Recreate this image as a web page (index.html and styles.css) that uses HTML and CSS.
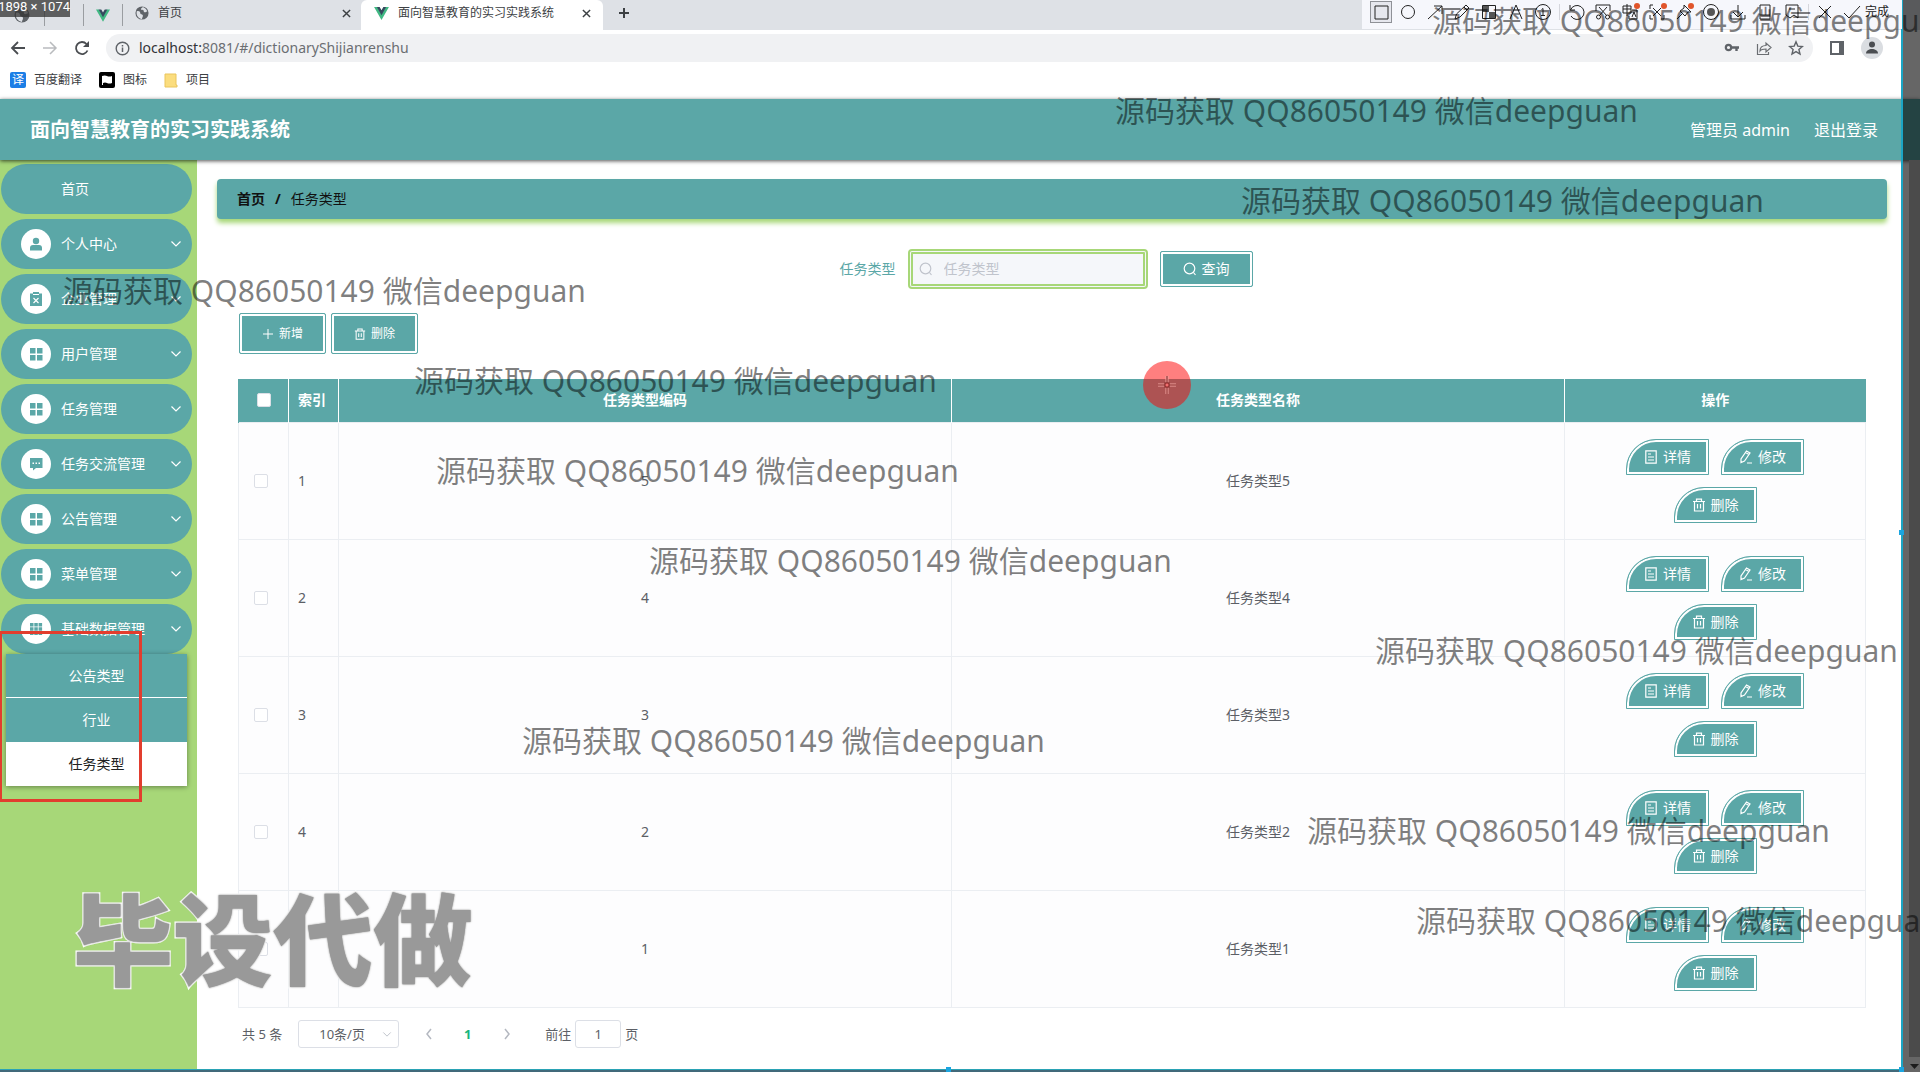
FILE: index.html
```html
<!DOCTYPE html>
<html lang="zh-CN">
<head>
<meta charset="utf-8">
<title>面向智慧教育的实习实践系统</title>
<link rel="stylesheet" href="styles.css">
</head>
<body>
<svg class="defs" aria-hidden="true">
  <symbol id="globe" viewBox="0 0 16 16"><circle cx="8" cy="8" r="7.5" fill="#5f6368"/><path d="M2 6c2-1 4 0 4 2s3 1 3 3-1 2-1 4C4 14 1 11 2 6zM9 1c-1 1-3 2-2 3s3 0 3 2 3 1 4 0c-1-3-3-4-5-5z" fill="#dee1e6"/></symbol>
  <symbol id="vue" viewBox="0 0 16 14"><path d="M0 0h3.5L8 7.5 12.500 0H16L8 14z" fill="#41b883"/><path d="M3 0h3l2 3.500L10 0h3L8 9z" fill="#35495e"/></symbol>
  <symbol id="down" viewBox="0 0 12 8"><path d="M1.500 1.500 6 6l4.500-4.500" fill="none" stroke="currentColor" stroke-width="1.200"/></symbol>
  <symbol id="grid" viewBox="0 0 14 14"><path d="M1 1h5.500v5.500H1zM8 1h5.500v5.500H8zM1 8h5.500v5.500H1zM8 8h5.500v5.500H8z" fill="#5ba7a7"/></symbol>
  <symbol id="grid9" viewBox="0 0 14 14"><path d="M1 1h3.500v3.500H1zM5.300 1h3.500v3.500H5.300zM9.600 1h3.500v3.500H9.600zM1 5.300h3.500v3.500H1zM5.300 5.300h3.500v3.500H5.300zM9.600 5.300h3.500v3.500H9.600zM1 9.600h3.500v3.500H1zM5.300 9.600h3.500v3.500H5.300zM9.600 9.600h3.500v3.500H9.600z" fill="#5ba7a7"/></symbol>
  <symbol id="person" viewBox="0 0 14 14"><circle cx="7" cy="4" r="3.200" fill="#5ba7a7"/><path d="M1 13.500v-2.500a3 3 0 0 1 3-3h6a3 3 0 0 1 3 3v2.500z" fill="#5ba7a7"/></symbol>
  <symbol id="clip" viewBox="0 0 14 14"><path d="M1 1.500h3V0h6v1.500h3V14H1z" fill="#5ba7a7"/><path d="M4 2.500h6M4.500 6l5 5M9.500 6l-5 5" stroke="#fff" stroke-width="1.200"/></symbol>
  <symbol id="chat" viewBox="0 0 14 14"><path d="M1 1h12.500v10H7l-3 2.500V11H1z" fill="#5ba7a7"/><path d="M3.500 5.500h1.500v1.500H3.500zM6.500 5.500H8V7H6.500zM9.500 5.500H11V7H9.500z" fill="#fff"/></symbol>
  <symbol id="search" viewBox="0 0 14 14"><circle cx="6.500" cy="6.500" r="5.300" fill="none" stroke="currentColor" stroke-width="1.200"/><path d="m10.500 10.500 2 2.500" stroke="currentColor" stroke-width="1.200"/></symbol>
  <symbol id="plus" viewBox="0 0 12 12"><path d="M6 1v10M1 6h10" stroke="currentColor"/></symbol>
  <symbol id="trash" viewBox="0 0 14 14"><path d="M1 3.500h12M4.500 3V1.200h5V3M2.500 3.500v9.500h9V3.500M5.500 6v4.500M8.500 6v4.500" fill="none" stroke="currentColor" stroke-width="1.200"/></symbol>
  <symbol id="doc" viewBox="0 0 14 14"><path d="M1.800.8h10.400v12.400H1.800zM4 4h3M4 7h6M4 10h6" fill="none" stroke="currentColor" stroke-width="1.200"/></symbol>
  <symbol id="edit" viewBox="0 0 14 14"><path d="M2 12.500V9l5.500-8 3.500 2-5.500 8zM6.500 2.500l3.500 2M8 13h5" fill="none" stroke="currentColor" stroke-width="1.200"/></symbol>
  <symbol id="close" viewBox="0 0 10 10"><path d="m1 1 8 8M9 1 1 9" stroke="#3c4043" stroke-width="1.600"/></symbol>
</svg>

<div class="browser">
  <div class="tabs">
    <span class="tab mini first"><svg width="16" height="16"><use href="#globe"/></svg></span>
    <span class="tab mini"></span>
    <span class="tab mini vue"><svg width="14" height="13"><use href="#vue"/></svg></span>
    <span class="tab wide"><svg width="14" height="14"><use href="#globe"/></svg><span>首页</span><svg class="x" width="9" height="9"><use href="#close"/></svg></span>
    <span class="tab active"><svg width="15" height="13"><use href="#vue"/></svg><span>面向智慧教育的实习实践系统</span><svg class="x" width="9" height="9"><use href="#close"/></svg></span>
    <svg class="newtab" width="12" height="12"><use href="#plus"/></svg>
  </div>
  <div class="address">
    <svg width="16" height="16" viewBox="0 0 16 16"><path d="M15 8H2m6-6L2 8l6 6" fill="none" stroke="#4a4d51" stroke-width="1.800"/></svg>
    <svg width="16" height="16" viewBox="0 0 16 16"><path d="M1 8h13M8 2l6 6-6 6" fill="none" stroke="#b9bbbe" stroke-width="1.500"/></svg>
    <svg width="16" height="16" viewBox="0 0 16 16"><path d="M13.500 10.500A6 6 0 1 1 12.500 4" fill="none" stroke="#4a4d51" stroke-width="1.800"/><path d="M15 1v6H9z" fill="#4a4d51"/></svg>
    <div class="url">
      <svg width="15" height="15" viewBox="0 0 15 15"><circle cx="7.500" cy="7.500" r="6.300" fill="none" stroke="#5f6368" stroke-width="1.400"/><path d="M7.500 6.500V11M7.500 4v1.500" stroke="#5f6368" stroke-width="1.500"/></svg>
      <span class="path"><b>localhost:</b>8081/#/dictionaryShijianrenshu</span>
      <svg width="16" height="16" viewBox="0 0 16 16"><circle cx="4.500" cy="7.500" r="2.700" fill="none" stroke="#5f6368" stroke-width="2.200"/><path d="M8 7.500h7M12.500 8v3" stroke="#5f6368" stroke-width="2.400"/></svg>
      <svg width="16" height="16" viewBox="0 0 16 16"><path d="M1.500 4v10.500h11V12M4 11c0-4 3-5.500 6-5.500V3l5 4.500-5 4.500V9C7 9 5 9.500 4 11z" fill="none" stroke="#6b6e72" stroke-width="1.200"/></svg>
      <svg width="16" height="16" viewBox="0 0 16 16"><path d="m8 1.800 1.800 4.300 4.600.4-3.500 3 1.100 4.600-4-2.500-4 2.500 1.100-4.600-3.500-3 4.600-.4z" fill="none" stroke="#5f6368" stroke-width="1.400"/></svg>
    </div>
    <svg width="16" height="16" viewBox="0 0 16 16"><path d="M2 2h12v12H2z" fill="none" stroke="#5f6368" stroke-width="2"/><path d="M10 2h5v12h-5z" fill="#5f6368"/></svg>
    <svg width="22" height="22" viewBox="0 0 22 22"><circle cx="11" cy="11" r="11" fill="#dadde1"/><circle cx="11" cy="7.500" r="3" fill="#4a4d51"/><path d="M5 16.500c0-6 12-6 12 0z" fill="#4a4d51"/></svg>
    <svg width="6" height="16" viewBox="0 0 6 16"><path d="M2 2h2v2H2zM2 7h2v2H2zM2 12h2v2H2z" fill="#4a4d51"/></svg>
  </div>
  <nav class="bookmarks">
    <a href="#"><i class="fy">译</i>百度翻译</a>
    <a href="#"><svg width="16" height="16" viewBox="0 0 16 16"><rect width="16" height="16" rx="2"/><path d="M3 13V4q3-1 5 0t5 0v7q-3 1-5 0t-4 0v2" fill="#fff"/></svg>图标</a>
    <a href="#"><svg width="14" height="15" viewBox="0 0 14 15"><path d="M1 1h11v11h1v2H1z" fill="#fbdd7e" stroke="#eac55c"/></svg>项目</a>
  </nav>
</div>

<header class="topbar">
  <h1>面向智慧教育的实习实践系统</h1>
  <span>管理员 admin</span>
  <a href="#">退出登录</a>
</header>

<div class="body">
  <aside class="side">
    <a class="item home" href="#">首页</a>
    <a class="item" href="#"><i><svg><use href="#person"/></svg></i>个人中心<svg class="arr"><use href="#down"/></svg></a>
    <a class="item" href="#"><i><svg><use href="#clip"/></svg></i>企业管理<svg class="arr"><use href="#down"/></svg></a>
    <a class="item" href="#"><i><svg><use href="#grid"/></svg></i>用户管理<svg class="arr"><use href="#down"/></svg></a>
    <a class="item" href="#"><i><svg><use href="#grid"/></svg></i>任务管理<svg class="arr"><use href="#down"/></svg></a>
    <a class="item" href="#"><i><svg><use href="#chat"/></svg></i>任务交流管理<svg class="arr"><use href="#down"/></svg></a>
    <a class="item" href="#"><i><svg><use href="#grid"/></svg></i>公告管理<svg class="arr"><use href="#down"/></svg></a>
    <a class="item" href="#"><i><svg><use href="#grid"/></svg></i>菜单管理<svg class="arr"><use href="#down"/></svg></a>
    <a class="item" href="#"><i><svg><use href="#grid9"/></svg></i>基础数据管理<svg class="arr"><use href="#down"/></svg></a>
    <div class="sub">
      <a href="#">公告类型</a>
      <a href="#">行业</a>
      <a class="on" href="#">任务类型</a>
    </div>
  </aside>

  <main class="main">
    <div class="crumb"><b>首页</b><b>/</b><span>任务类型</span></div>
    <div class="panel">
      <form class="query">
        <label for="kind">任务类型</label>
        <div class="field"><svg width="14" height="14"><use href="#search"/></svg><input id="kind" type="text" placeholder="任务类型"></div>
        <button type="button" class="btn find"><svg width="14" height="14"><use href="#search"/></svg>查询</button>
      </form>
      <div class="tools">
        <button type="button" class="btn"><svg width="12" height="12"><use href="#plus"/></svg>新增</button>
        <button type="button" class="btn"><svg width="12" height="12" viewBox="0 0 14 14"><use href="#trash"/></svg>删除</button>
      </div>
      <table class="data">
        <colgroup><col class="c1"><col class="c2"><col><col><col class="c5"></colgroup>
        <thead><tr><th><input type="checkbox" aria-label="全选"></th><th class="idx">索引</th><th>任务类型编码</th><th>任务类型名称</th><th>操作</th></tr></thead>
        <tbody>
          <tr><td class="pick"><input type="checkbox" aria-label="1"></td><td class="idx">1</td><td>5</td><td>任务类型5</td><td><div class="ops"><button class="btn op"><svg><use href="#doc"/></svg>详情</button><button class="btn op"><svg><use href="#edit"/></svg>修改</button><button class="btn op"><svg><use href="#trash"/></svg>删除</button></div></td></tr>
          <tr><td class="pick"><input type="checkbox" aria-label="2"></td><td class="idx">2</td><td>4</td><td>任务类型4</td><td><div class="ops"><button class="btn op"><svg><use href="#doc"/></svg>详情</button><button class="btn op"><svg><use href="#edit"/></svg>修改</button><button class="btn op"><svg><use href="#trash"/></svg>删除</button></div></td></tr>
          <tr><td class="pick"><input type="checkbox" aria-label="3"></td><td class="idx">3</td><td>3</td><td>任务类型3</td><td><div class="ops"><button class="btn op"><svg><use href="#doc"/></svg>详情</button><button class="btn op"><svg><use href="#edit"/></svg>修改</button><button class="btn op"><svg><use href="#trash"/></svg>删除</button></div></td></tr>
          <tr><td class="pick"><input type="checkbox" aria-label="4"></td><td class="idx">4</td><td>2</td><td>任务类型2</td><td><div class="ops"><button class="btn op"><svg><use href="#doc"/></svg>详情</button><button class="btn op"><svg><use href="#edit"/></svg>修改</button><button class="btn op"><svg><use href="#trash"/></svg>删除</button></div></td></tr>
          <tr><td class="pick"><input type="checkbox" aria-label="5"></td><td class="idx">5</td><td>1</td><td>任务类型1</td><td><div class="ops"><button class="btn op"><svg><use href="#doc"/></svg>详情</button><button class="btn op"><svg><use href="#edit"/></svg>修改</button><button class="btn op"><svg><use href="#trash"/></svg>删除</button></div></td></tr>
        </tbody>
      </table>
      <div class="pager">
        <span>共 5 条</span>
        <span class="size"><select aria-label="每页条数"><option>10条/页</option></select><svg width="10" height="7" viewBox="0 0 12 8"><use href="#down"/></svg></span>
        <button type="button" class="pg" aria-label="上一页"><svg width="8" height="12" viewBox="0 0 8 12"><path d="M6 1 2 6l4 5" fill="none" stroke="currentColor" stroke-width="1.500"/></svg></button>
        <button type="button" class="pg cur">1</button>
        <button type="button" class="pg" aria-label="下一页"><svg width="8" height="12" viewBox="0 0 8 12"><path d="m2 1 4 5-4 5" fill="none" stroke="currentColor" stroke-width="1.500"/></svg></button>
        <label class="jump">前往<input type="text" value="1">页</label>
      </div>
    </div>
  </main>
</div>

<div class="overlay">
  <div class="shade right"><span class="track"></span><svg class="tri" width="9" height="5" viewBox="0 0 9 5"><path d="M0 0h9L4.500 5z" fill="#1c1c1c"/></svg></div>
  <div class="shade bottom"></div>
  <i class="grip g1"></i><i class="grip g2"></i><i class="grip g3"></i>
  <div class="dims">1898 × 1074</div>
  <div class="box"></div>
  <div class="cursor"><svg width="20" height="20" viewBox="0 0 20 20"><path d="M10 1v18M1 10h18" stroke="#f2a3a0" stroke-width="3"/><path d="M10 1v18M1 10h18" stroke="#7a1d1d"/><rect x="8" y="8" width="4" height="4" fill="#f07070" stroke="#7a1d1d"/></svg></div>
  <div class="capture">
    <svg class="sel" viewBox="0 0 20 20"><path d="M4 4h13v13H4z"/></svg>
    <svg viewBox="0 0 20 20"><circle cx="10" cy="10" r="6.500"/></svg>
    <svg viewBox="0 0 20 20"><path d="M3 17 17 4M9 4h8v8"/></svg>
    <svg viewBox="0 0 20 20"><path d="m3 17 1.500-5L14 3l3 3-9 9zM12 5l3 3"/></svg>
    <svg viewBox="0 0 20 20"><path d="M3.500 3.500h13v13h-13z"/><path class="f" d="M4 4h6v6H4zM10 10h6v6h-6z"/></svg>
    <svg viewBox="0 0 20 20"><path d="m4 17 6-14 6 14M6.500 12h7"/></svg>
    <svg viewBox="0 0 20 20"><circle cx="10" cy="10" r="7.500"/><path d="M8.500 7.500 10 6.500v7M8 13.500h4"/></svg>
    <i class="sep"></i>
    <svg viewBox="0 0 20 20"><path d="M4 3v5h5M4.500 8A7 7 0 1 1 5 14"/></svg>
    <svg viewBox="0 0 20 20"><path d="M3 9V3h14v6M6 5l8 9M14 5l-8 9"/><circle cx="5.500" cy="15" r="2"/><circle cx="14.500" cy="15" r="2"/></svg>
    <svg viewBox="0 0 20 20"><path d="M3 4h8v7H3zM7 2v12M3 7h8M12 8h5v9H9v-3M12 15l2-5 2 5"/><circle class="dot" cx="17" cy="4" r="3"/></svg>
    <svg viewBox="0 0 20 20"><path d="M3 7V3h3M3 13v4h3M14 17h3v-4M6 6l8 8M14 6l-8 8"/><circle class="dot" cx="17" cy="4" r="3"/></svg>
    <svg viewBox="0 0 20 20"><path d="m10 3 7 7-3 0-3 4-5-5 4-3zM8 12l-5 5"/><circle class="dot" cx="17" cy="4" r="3"/></svg>
    <svg viewBox="0 0 20 20"><circle cx="10" cy="10" r="7.500"/><circle class="f" cx="10" cy="10" r="4"/></svg>
    <svg viewBox="0 0 20 20"><path d="M10 3v12M5 10l5 5 5-5M3 13v4h14v-4"/></svg>
    <svg viewBox="0 0 20 20"><path d="M5 3h10v14H5zM5 13h10"/></svg>
    <svg viewBox="0 0 20 20"><path d="M4 3h12v13l-4-3-4 3-4-3zM7 7h6"/></svg>
    <i class="sep"></i>
    <svg viewBox="0 0 20 20"><path d="m4 4 12 12M16 4 4 16"/></svg>
    <svg viewBox="0 0 20 20"><path d="m2 11 5 5L18 4"/></svg>
    <span>完成</span>
  </div>
  <div class="mark m1">源码获取 QQ86050149 微信deepguan</div>
  <div class="mark m2">源码获取 QQ86050149 微信deepguan</div>
  <div class="mark m3">源码获取 QQ86050149 微信deepguan</div>
  <div class="mark m4">源码获取 QQ86050149 微信deepguan</div>
  <div class="mark m5">源码获取 QQ86050149 微信deepguan</div>
  <div class="mark m6">源码获取 QQ86050149 微信deepguan</div>
  <div class="mark m7">源码获取 QQ86050149 微信deepguan</div>
  <div class="mark m8">源码获取 QQ86050149 微信deepguan</div>
  <div class="mark m9">源码获取 QQ86050149 微信deepguan</div>
  <div class="mark m10">源码获取 QQ86050149 微信deepguan</div>
  <div class="mark m11">源码获取 QQ86050149 微信deepguan</div>
  <div class="big">毕设代做</div>
</div>
</body>
</html>
```
FILE: styles.css
```css
* { box-sizing: border-box; }
body {
  margin: 0;
  min-height: 100vh;
  position: relative;
  display: flex;
  flex-direction: column;
  font: 14px/20px "Noto Sans", "Noto Sans CJK SC", sans-serif;
  color: #5c5f66;
  background: #fff;
}
a { color: inherit; text-decoration: none; }
i { font-style: normal; }
svg { flex: none; }
.defs { position: absolute; width: 0; height: 0; }
button, input, select { font: inherit; color: inherit; margin: 0; }

/* browser chrome */
.browser { font-size: 12px; color: #3c4043; }
.tabs { display: flex; align-items: center; height: 30px; background: #dee1e6; }
.tab { display: flex; align-items: center; height: 30px; padding-bottom: 4px; }
.mini { width: 39px; height: 22px; padding: 0; justify-content: center; border-right: 1px solid #9a9da1; }
.mini.first { width: 45px; }
.wide { width: 238px; padding: 0 10px 4px 12px; gap: 9px; }
.active { width: 242px; padding: 0 12px 4px 13px; gap: 9px; background: #fff; border-radius: 6px 6px 0 0; }
.tab .x { margin-left: auto; }
.newtab { margin: 0 15px 4px; stroke-width: 2; }
.address { display: flex; align-items: center; height: 36px; padding: 0 15px 0 10px; gap: 16px; }
.url { flex: 1; display: flex; align-items: center; height: 28px; padding: 0 9px; gap: 16px; border-radius: 14px; background: #f0f1f3; }
.url .path { flex: 1; margin-left: -7px; font-size: 14px; color: #6b6e72; }
.url b { font-weight: 400; color: #303236; }
.bookmarks { display: flex; align-items: center; height: 33px; padding: 0 10px 5px; gap: 17px; }
.bookmarks a { display: flex; align-items: center; gap: 8px; }
.fy { width: 16px; height: 16px; border-radius: 2px; background: #1b7ee6; color: #fff; line-height: 15px; text-align: center; }

/* application header */
.topbar {
  display: flex; align-items: center; gap: 24px;
  height: 61px; padding: 0 42px 0 30px;
  background: #5ba7a7; color: #fff; font-size: 16px;
  box-shadow: 0 1px 4px rgba(0, 0, 0, .7);
  position: relative;
}
.topbar h1 { flex: 1; margin: 0; font-size: 20px; line-height: 28px; }
.body { flex: 1; display: flex; }

/* side menu */
.side { flex: none; width: 197px; padding: 4px 5px 0 1px; background: #a7d778; }
.item {
  display: flex; align-items: center; gap: 10px;
  height: 50px; margin-bottom: 5px; padding: 0 10px 0 20px;
  border-radius: 25px; background: #5ba7a7; color: #fff;
}
.home { padding-left: 60px; }
.item i { display: flex; align-items: center; justify-content: center; width: 30px; height: 30px; border-radius: 50%; background: #fff; }
.item i svg { width: 14px; height: 14px; }
.item .arr { width: 12px; height: 8px; margin-left: auto; }
.sub { margin: -5px 5px 0; box-shadow: 0 1px 5px rgba(0, 0, 0, .4); position: relative; }
.sub a { display: flex; align-items: center; justify-content: center; height: 44px; background: #5ba7a7; color: #fff; }
.sub a:first-child { border-bottom: 1px solid #fff; }
.sub a.on { background: #fff; color: #222; }

/* content */
.main { flex: 1; min-width: 0; padding: 19px 33px 0 20px; }
.crumb {
  display: flex; align-items: center; gap: 10px;
  height: 40px; padding: 0 20px; border-radius: 4px;
  background: #5ba7a7; color: #111; box-shadow: 0 4px 5px #a7d778;
}
.panel { padding: 30px 21px 0; }
.query { display: flex; align-items: center; justify-content: center; gap: 12px; height: 40px; padding-right: 12px; color: #5ba7a7; }
.field { display: flex; align-items: center; gap: 11px; width: 240px; height: 40px; padding: 0 6px; border: 5px double #a7d778; border-radius: 4px; background: #f5f7fa; color: #c0c4cc; }
.field input { flex: 1; min-width: 0; padding: 0; border: 0; background: none; outline: 0; }
.field input::placeholder { color: #c0c4cc; }
.btn {
  display: flex; align-items: center; justify-content: center; gap: 5px;
  padding: 0; border: 1px solid #5ba7a7; border-radius: 2px;
  background: #5ba7a7; color: #fff; box-shadow: inset 0 0 0 2px #fff;
}
.find { width: 93px; height: 36px; }
.tools { display: flex; gap: 5px; padding: 24px 1px 25px; }
.tools .btn { width: 87px; height: 41px; font-size: 12px; }

.data { width: 100%; border-collapse: collapse; table-layout: fixed; text-align: center; }
.c1, .c2 { width: 50px; }
.c5 { width: 301px; }
.data th { height: 43px; padding: 0; background: #5ba7a7; color: #fff; border-left: 1px solid #fff; }
.data th:first-child { border-left-color: #5ba7a7; }
.data td { height: 117px; padding: 0; border: 1px solid #ebeef2; background: #fdfdfe; }
.data td.pick { padding-right: 5px; }
.data .idx { padding-left: 9px; text-align: left; }
.data input { appearance: none; display: block; width: 14px; height: 14px; margin: 0 auto; border: 1px solid #dcdfe6; border-radius: 2px; background: #fff; }
.ops { display: flex; flex-wrap: wrap; justify-content: center; gap: 12px; padding: 0 50px; }
.op { width: 83px; height: 36px; border-radius: 30px 0 0 0; }
.op svg { width: 14px; height: 14px; }

.pager { display: flex; align-items: center; height: 52px; padding-left: 4px; font-size: 13px; }
.size { position: relative; width: 101px; margin: 0 10px 0 16px; }
.size select { appearance: none; width: 100%; height: 28px; padding: 0 20px; border: 1px solid #dcdfe6; border-radius: 3px; background: #fff; }
.size svg { position: absolute; right: 7px; top: 11px; color: #c0c4cc; }
.pg { display: flex; align-items: center; justify-content: center; width: 39px; height: 28px; padding: 0; border: 0; background: none; color: #b4b8c0; }
.pg.cur { color: #18b57c; font-weight: 700; }
.jump { display: flex; align-items: center; gap: 4px; margin-left: 19px; }
.jump input { width: 46px; height: 28px; padding: 0; border: 1px solid #dcdfe6; border-radius: 3px; text-align: center; }

/* screen-capture layer */
.overlay { position: absolute; inset: 0; overflow: hidden; pointer-events: none; }
.shade { position: absolute; background: rgba(0, 0, 0, .6); }
.right { top: 0; right: 0; bottom: 0; width: 19px; border-left: 2px solid #1ba5c4; }
.track { position: absolute; top: 160px; right: 0; bottom: 15px; width: 11px; background: #4b4b4b; }
.tri { position: absolute; right: 1px; bottom: 3px; }
.bottom { left: 0; right: 18px; bottom: 0; height: 3px; border-top: 1px solid #2aa3b5; background: #41697a; }
.grip { position: absolute; width: 5px; height: 5px; background: #1ba5e0; }
.g1 { right: 16px; top: 530px; }
.g2 { right: 16px; bottom: 0; }
.g3 { left: 946px; bottom: 0; }
.dims { position: absolute; left: 0; top: 0; width: 70px; height: 17px; background: rgba(50, 50, 50, .75); color: #fff; font: 13px/13px Roboto, sans-serif; white-space: nowrap; display: flex; justify-content: flex-end; }
.box { position: absolute; left: -1px; top: 631px; width: 143px; height: 171px; border: 3px solid #e23d2e; }
.cursor { position: absolute; left: 1143px; top: 361px; width: 48px; height: 48px; border-radius: 50%; background: rgba(255, 0, 0, .5); display: flex; align-items: center; justify-content: center; }
.capture { position: absolute; right: 18px; top: 0; width: 540px; height: 29px; padding: 2px 12px 0 9px; display: flex; align-items: flex-start; gap: 7px; background: #f6f7fc; color: #222; font-size: 12px; }
.capture svg { width: 20px; height: 20px; fill: none; stroke: #222; stroke-width: 1; }
.capture svg.sel { outline: 1px solid #8f9197; background: #e6e7ee; }
.capture .f { fill: #555; stroke: none; }
.capture .dot { fill: #e0552b; stroke: none; }
.capture .sep { width: 1px; height: 16px; margin: 2px -1px; background: #d5d6dc; }
.capture span { margin-left: -4px; white-space: nowrap; }
.mark { position: absolute; font-size: 30px; line-height: 40px; color: rgba(0, 0, 0, .5); white-space: nowrap; }
.m1 { left: 1432px; top: 1px; }
.m2 { left: 1115px; top: 91px; }
.m3 { left: 1241px; top: 181px; }
.m4 { left: 63px; top: 271px; }
.m5 { left: 414px; top: 361px; }
.m6 { left: 436px; top: 451px; }
.m7 { left: 649px; top: 541px; }
.m8 { left: 1375px; top: 631px; }
.m9 { left: 522px; top: 721px; }
.m10 { left: 1307px; top: 811px; }
.m11 { left: 1416px; top: 901px; }
.big { position: absolute; left: 73px; top: 879px; font-size: 100px; line-height: 120px; font-weight: 900; color: #999; -webkit-text-stroke: 3px #fff; paint-order: stroke fill; text-shadow: 0 0 2px #777; }
```
